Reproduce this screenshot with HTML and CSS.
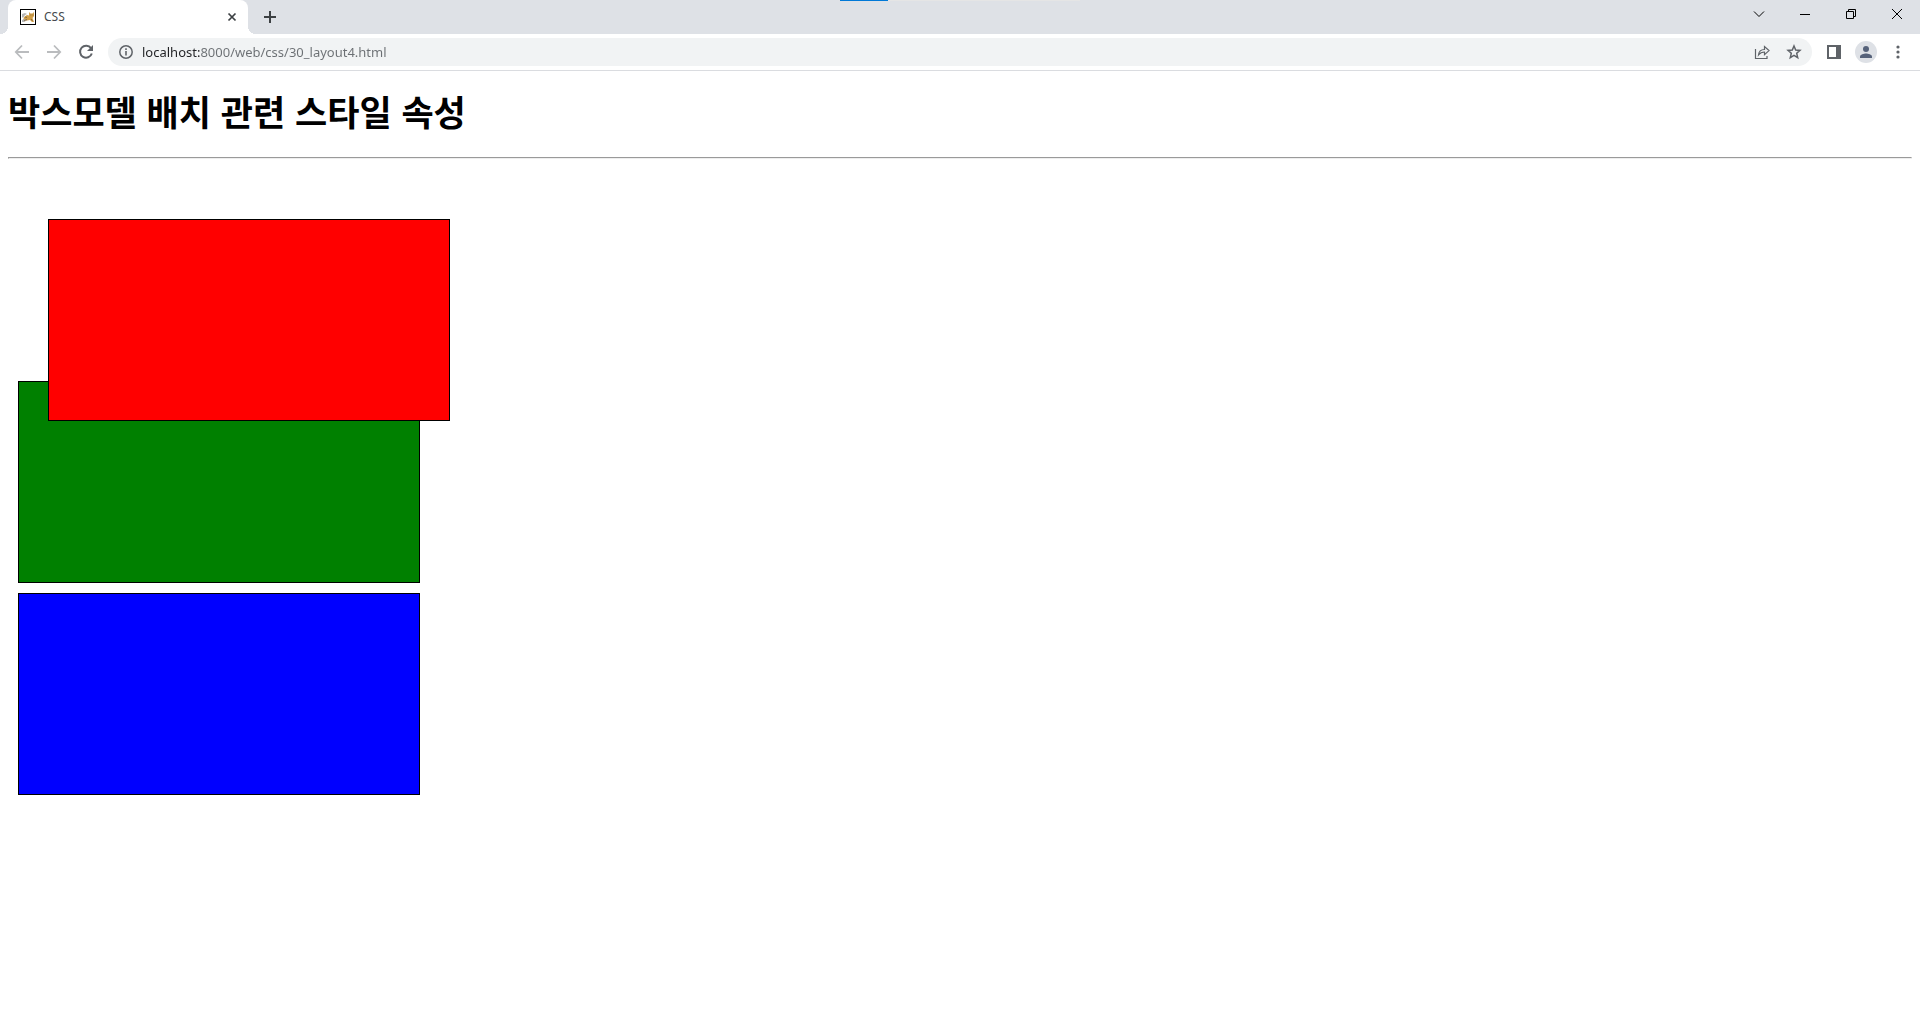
FILE: index.html
```
<!DOCTYPE html>
<html lang="ko">
<head>
<title>CSS</title>
<meta charset="utf-8">
<link rel="stylesheet" href="styles.css">
</head>
<body>
<header class="browser">
    <div class="tabbar">
        <div class="loading"><div class="loaded"></div></div>
        <div class="tab">
            <svg class="favicon" width="16" height="16" viewBox="0 0 16 16">
                <rect x=".5" y=".5" width="15" height="15" fill="#fff" stroke="#000"/>
                <path d="M4 8l3-2 2 .5V3l1.500 1.500h2L14 3v4l-1.500 2 1.500 4h-2l-2-2-3 .5L3 13H2l1.500-3z" fill="#d2a04a"/>
                <path d="M2 5l3-1 2 1-2 1-2 3-1-1zM2 11l2-1 3 1-3 2H2z" fill="#b5b5b5"/>
                <path d="M10.500 6h.8M12.500 6h.8M5 8l2 .5M4 11.500l3-1M11 10l1.500 2" stroke="#765b35" fill="none" stroke-width=".8"/>
            </svg>
            <span class="tabTitle">CSS</span>
            <button class="tabClose" aria-label="탭 닫기">
                <svg width="16" height="16" viewBox="0 0 16 16"><path d="M4.5 4.5l7 7M11.5 4.5l-7 7" stroke="#3c4043" stroke-width="1.7"/></svg>
            </button>
        </div>
        <button class="tool newTab" aria-label="새 탭">
            <svg width="16" height="16" viewBox="0 0 16 16"><path d="M8 2v12M2 8h12" stroke="#3c4043" stroke-width="2"/></svg>
        </button>
        <div class="windowButtons">
            <button aria-label="탭 검색"><svg width="12" height="12" viewBox="0 0 12 12"><path d="M1 3.5l5 5 5-5"/></svg></button>
            <button aria-label="최소화"><svg width="12" height="12" viewBox="0 0 12 12"><path d="M1 6.5h10"/></svg></button>
            <button aria-label="이전 크기로"><svg width="12" height="12" viewBox="0 0 12 12"><path d="M1.500 3.500h7v7h-7zM3.500 3.500v-2h7v7h-2"/></svg></button>
            <button aria-label="닫기"><svg width="12" height="12" viewBox="0 0 12 12"><path d="M1 1l10 10M11 1L1 11"/></svg></button>
        </div>
    </div>
    <div class="toolbar">
        <button class="tool" aria-label="뒤로" disabled>
            <svg width="16" height="16" viewBox="0 0 16 16"><path d="M15 8H2M8 1.500L1.800 8 8 14.500" fill="none" stroke="#babcbe" stroke-width="1.800"/></svg>
        </button>
        <button class="tool" aria-label="앞으로" disabled>
            <svg width="16" height="16" viewBox="0 0 16 16"><path d="M1 8h13M8 1.500L14.200 8 8 14.500" fill="none" stroke="#babcbe" stroke-width="1.800"/></svg>
        </button>
        <button class="tool" aria-label="새로고침">
            <svg width="16" height="16" viewBox="0 0 16 16"><path d="M13 4.200A6 6 0 1 0 13.800 9.500" fill="none" stroke="#5f6368" stroke-width="2"/><path d="M15 1v6H9z" fill="#5f6368"/></svg>
        </button>
        <div class="address">
            <button class="tool" aria-label="사이트 정보">
                <svg width="16" height="16" viewBox="0 0 16 16"><circle cx="8" cy="8" r="6.200" fill="none" stroke="#5f6368" stroke-width="1.500"/><path d="M8 7v4.500M8 4.300v1.700" stroke="#5f6368" stroke-width="1.600"/></svg>
            </button>
            <input class="url" type="text" value="localhost:8000/web/css/30_layout4.html" aria-label="주소창">
            <button class="tool" aria-label="공유">
                <svg width="16" height="16" viewBox="0 0 16 16"><path d="M1.500 5v9.500h11.500V12M4.500 11c.3-3.500 2.300-5.500 6-5.500V2.600l4.500 4-4.500 4V8C8 8 6 9 4.500 11z" fill="none" stroke="#5f6368" stroke-width="1.200"/></svg>
            </button>
            <button class="tool" aria-label="북마크">
                <svg width="16" height="16" viewBox="0 0 16 16"><path d="M8 2l1.700 4 4.300.4-3.300 2.900 1 4.300L8 11.300l-3.700 2.300 1-4.300L2 6.400 6.300 6z" fill="none" stroke="#5f6368" stroke-width="1.500"/></svg>
            </button>
        </div>
        <button class="tool" aria-label="측면 패널">
            <svg width="14" height="14" viewBox="0 0 14 14"><path d="M0 0h14v14H0zM2 2v10h7V2z" fill="#5f6368" fill-rule="evenodd"/></svg>
        </button>
        <button class="tool" aria-label="프로필">
            <svg width="22" height="22" viewBox="0 0 22 22"><circle cx="11" cy="11" r="11" fill="#dee1e6"/><circle cx="11" cy="8" r="3" fill="#56627a"/><path d="M5 17v-1.500c0-2 4-3 6-3s6 1 6 3V17z" fill="#56627a"/></svg>
        </button>
        <button class="tool" aria-label="메뉴">
            <svg width="16" height="16" viewBox="0 0 16 16" fill="#5f6368"><circle cx="8" cy="3" r="1.600"/><circle cx="8" cy="8" r="1.600"/><circle cx="8" cy="13" r="1.600"/></svg>
        </button>
    </div>
</header>
<main>
    <h1>박스모델 배치 관련 스타일 속성</h1>
    <hr>
    <div class="box red"></div>
    <div class="box green"></div>
    <div class="box blue"></div>
</main>
</body>
</html>
```
FILE: styles.css
```
body {margin:0; background:#fff; font-family:"Noto Sans", "Noto Sans CJK KR", sans-serif;}
button {display:flex; align-items:center; justify-content:center; border:0; padding:0; background:none;}

.browser {border-bottom:1px solid #dadce0;}
.tabbar {position:relative; display:flex; align-items:center; height:34px; padding-left:8px; background:#dee1e6;}
.tab {position:relative; display:flex; align-items:center; box-sizing:border-box; width:240px; height:34px; padding:0 8px 0 12px; background:#fff; border-radius:8px 8px 0 0;}
.tab::before, .tab::after {content:""; position:absolute; bottom:0; width:8px; height:8px;}
.tab::before {right:100%; background:radial-gradient(circle at 0 0, transparent 8px, #fff 8px);}
.tab::after {left:100%; background:radial-gradient(circle at 100% 0, transparent 8px, #fff 8px);}
.tabTitle {flex:1; margin-left:8px; font-size:12px; line-height:16px; color:#45494d;}
.tabClose {width:16px; height:16px;}
.newTab {margin-left:8px;}
.windowButtons {display:flex; align-self:flex-start; margin-left:auto;}
.windowButtons button {width:46px; height:28px;}
.windowButtons svg {fill:none; stroke:#000;}

/* loading line over the tab bar */
.loading {position:absolute; top:0; left:50%; width:240px; height:1px; transform:translateX(-50%); background:#e5e5e5;}
.loaded {width:20%; height:1px; background:#0078d7;}

.toolbar {display:flex; align-items:center; gap:4px; height:36px; padding:0 8px;}
.tool {flex:none; width:28px; height:28px;}
.address {flex:1; display:flex; align-items:center; gap:4px; height:28px; margin:0 4px; padding:0 4px; background:#f1f3f4; border-radius:14px;}
/* host in black, the rest of the address in gray */
.url {flex:1; min-width:0; height:20px; margin:0 0 0 -2px; padding:0; border:0; outline:0; font-family:inherit; font-size:13px; line-height:20px; color:transparent; background:linear-gradient(90deg, #202124 58px, #6b6f73 58px); -webkit-background-clip:text; background-clip:text;}

main {padding:0 8px;}
h1 {margin:20px 0 26px; font-family:"Noto Sans CJK KR", sans-serif; font-size:35px; line-height:40px;}
hr {margin:8px 0; border:1px solid; border-color:#9a9a9a #eee #eee #9a9a9a;}
.box {width:400px; height:200px; margin:10px; border:1px solid black;}
.red {position:relative; top:50px; left:30px; background-color:red;}
.green {background-color:green;}
.blue {background-color:blue;}
```
